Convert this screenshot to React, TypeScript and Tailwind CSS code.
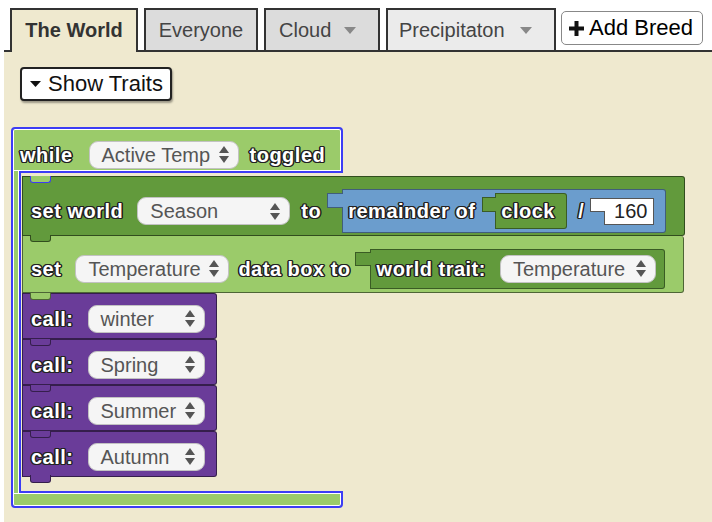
import React from "react";

const label =
  "whitespace-nowrap text-[20px] font-bold leading-none tracking-[0.5px] text-white [text-shadow:1px_1px_0_#222,-1px_-1px_0_#222,1px_-1px_0_#222,-1px_1px_0_#222,0_1px_0_#222,0_-1px_0_#222,1px_0_0_#222,-1px_0_0_#222,1.5px_0_0_#222,-1.5px_0_0_#222]";

const Arrows = () => (
  <svg width="10" height="17" viewBox="0 0 10 17" className="shrink-0">
    <polygon points="0,7 5,0 10,7" fill="#555" />
    <polygon points="0,10 10,10 5,17" fill="#555" />
  </svg>
);

const Caret = ({ color = "#888" }: { color?: string }) => (
  <svg width="12" height="7" viewBox="0 0 12 7" className="shrink-0">
    <polygon points="0,0 12,0 6,7" fill={color} />
  </svg>
);

function Drop({ text, className }: { text: string; className: string }) {
  return (
    <div
      className={`flex h-[28px] shrink-0 items-center justify-between rounded-[9px] border border-[#c2c2c2] bg-[#f5f5f5] pl-[12px] pr-[9px] text-[20px] leading-none text-[#555] ${className}`}
    >
      <span className="whitespace-nowrap">{text}</span>
      <Arrows />
    </div>
  );
}

// little tab hanging from the block above
function Notch({ className }: { className: string }) {
  return <div className={`absolute left-[7px] top-[-1px] h-[7px] w-[21px] rounded-b-[3px] border border-t-0 ${className}`} />;
}

function CallBlock({ name, first, last }: { name: string; first?: boolean; last?: boolean }) {
  return (
    <div className="relative flex h-[46px] w-[195px] items-center rounded-r-[3px] border border-black/50 bg-[#6a3c99] pl-[8px] pt-[5px]">
      <Notch className={first ? "border-black/50 bg-[#9bcb6a]" : "border-black/50 bg-[#6a3c99]"} />
      <span className={label}>call:</span>
      <Drop text={name} className="ml-[14px] w-[117px]" />
      {last && (
        <div className="absolute left-[7px] top-[calc(100%-1px)] h-[8px] w-[21px] rounded-b-[3px] border border-t-0 border-black/50 bg-[#6a3c99]" />
      )}
    </div>
  );
}

export default function App() {
  return (
    <div className="h-[522px] w-[712px] overflow-hidden bg-white pl-[4px] font-['Liberation_Sans',Arial,sans-serif]">
      {/* tabs */}
      <div className="flex h-[52px] items-end border-b-2 border-[#333] pl-[6px]">
        <div className="-mb-[2px] flex h-[44px] w-[128px] items-center justify-center border-2 border-b-0 border-[#333] bg-[#efe9cf] pb-[2px] text-[20px] font-bold text-[#333]">
          The World
        </div>
        <div className="ml-[6px] flex h-[42px] w-[114px] items-center justify-center border-2 border-b-0 border-[#333] bg-[#dcdcdc] text-[20px] text-[#444]">
          Everyone
        </div>
        <div className="ml-[6px] flex h-[42px] w-[116px] items-center border-2 border-b-0 border-[#333] bg-[#dcdcdc] pl-[13px] text-[20px] text-[#444]">
          <span>Cloud</span>
          <span className="ml-[13px] flex"><Caret /></span>
        </div>
        <div className="ml-[6px] flex h-[42px] w-[170px] items-center border-2 border-b-0 border-[#333] bg-[#ebebeb] pl-[11px] text-[20px] text-[#444]">
          <span>Precipitaton</span>
          <span className="ml-[15px] flex"><Caret /></span>
        </div>
        <button className="mb-[5px] ml-[5px] flex h-[34px] w-[142px] items-center rounded-[5px] border border-[#888] bg-white pl-[7px] text-[22px] leading-none text-black">
          <svg width="15" height="15" viewBox="0 0 15 15" className="shrink-0">
            <rect x="5.5" y="0" width="4" height="15" fill="#111" />
            <rect x="0" y="5.5" width="15" height="4" fill="#111" />
          </svg>
          <span className="ml-[5px]">Add Breed</span>
        </button>
      </div>

      <div className="h-[470px] bg-[#efe9cf] pt-[15px]">
        <button className="ml-[16px] flex h-[34px] w-[152px] items-center rounded-[4px] border-2 border-[#222] bg-white pl-[8px] text-[22px] leading-none text-[#111] shadow-[1px_2px_2px_rgba(0,0,0,0.35)]">
          <svg width="11" height="6" viewBox="0 0 11 6" className="shrink-0">
            <polygon points="0,0 11,0 5.5,6" fill="#111" />
          </svg>
          <span className="ml-[7px]">Show Traits</span>
        </button>

        {/* while block (selected) */}
        <div className="ml-[7px] mt-[26px] flex flex-col">
          <div className="flex h-[46px] w-[332px] items-center rounded-t-[4px] border-2 border-[#3c3cf5] bg-[#9bcb6a] pl-[7px] pt-[9px] shadow-[inset_0_0_0_1px_#fff]">
            <span className={label}>while</span>
            <Drop text="Active Temp" className="ml-[16px] w-[150px]" />
            <span className={`ml-[11px] ${label}`}>toggled</span>
          </div>

          <div className="flex">
            <div className="relative z-10 -my-[2px] w-[10px] shrink-0 border-x-2 border-[#3c3cf5] bg-[#9bcb6a] shadow-[inset_1px_0_0_#fff,inset_-1px_0_0_#fff]" />
            <div className="ml-[1px] flex flex-col pb-[14px] pt-[3px]">
              {/* set world */}
              <div className="relative flex h-[60px] w-[663px] items-center rounded-r-[3px] border border-black/50 bg-[#629a3c] pl-[8px] pt-[10px]">
                <Notch className="border-[#3c3cf5] bg-[#9bcb6a]" />
                <span className={label}>set world</span>
                <Drop text="Season" className="ml-[14px] w-[153px]" />
                <span className={`ml-[11px] ${label}`}>to</span>
                <div className="ml-[6px] flex items-start">
                  <div className="relative z-10 -mr-[1px] mt-[4px] h-[15px] w-[16px] border-y border-l border-black/40 bg-[#6b9dcd]" />
                  <div className="flex h-[44px] w-[324px] items-center rounded-r-[3px] border border-black/40 bg-[#6b9dcd] pl-[5px]">
                    <span className={label}>remainder of</span>
                    <div className="ml-[7px] flex items-start">
                      <div className="relative z-10 -mr-[1px] mt-[4px] h-[15px] w-[14px] border-y border-l border-black/40 bg-[#629a3c]" />
                      <div className="flex h-[36px] w-[72px] items-center rounded-r-[3px] border border-black/40 bg-[#629a3c] pl-[5px]">
                        <span className={label}>clock</span>
                      </div>
                    </div>
                    <span className={`ml-[11px] ${label}`}>/</span>
                    <div className="ml-[6px] flex items-start">
                      <div className="relative z-10 -mr-[1px] h-[14px] w-[15px] border-y border-l border-[#555] bg-white" />
                      <div className="flex h-[27px] w-[50px] items-center justify-end border border-[#555] bg-white pr-[6px] text-[20px] leading-none text-[#222]">
                        160
                      </div>
                    </div>
                  </div>
                </div>
              </div>

              {/* set data box */}
              <div className="relative flex h-[57px] w-[662px] items-center rounded-r-[3px] border border-t-0 border-black/50 bg-[#9bcb6a] pl-[8px] pt-[9px]">
                <Notch className="border-black/50 bg-[#629a3c]" />
                <span className={label}>set</span>
                <Drop text="Temperature" className="ml-[14px] w-[154px]" />
                <span className={`ml-[9px] ${label}`}>data box to</span>
                <div className="ml-[4px] flex items-start">
                  <div className="relative z-10 -mr-[1px] mt-[3px] h-[14px] w-[16px] border-y border-l border-black/40 bg-[#629a3c]" />
                  <div className="flex h-[40px] w-[295px] items-center rounded-r-[3px] border border-black/40 bg-[#629a3c] pl-[6px]">
                    <span className={label}>world trait:</span>
                    <Drop text="Temperature" className="ml-[14px] w-[156px]" />
                  </div>
                </div>
              </div>

              <CallBlock name="winter" first />
              <CallBlock name="Spring" />
              <CallBlock name="Summer" />
              <CallBlock name="Autumn" last />
            </div>
          </div>

          <div className="h-[17px] w-[332px] rounded-b-[4px] border-2 border-[#3c3cf5] bg-[#9bcb6a] shadow-[inset_0_0_0_1px_#fff]" />
        </div>
      </div>
    </div>
  );
}
